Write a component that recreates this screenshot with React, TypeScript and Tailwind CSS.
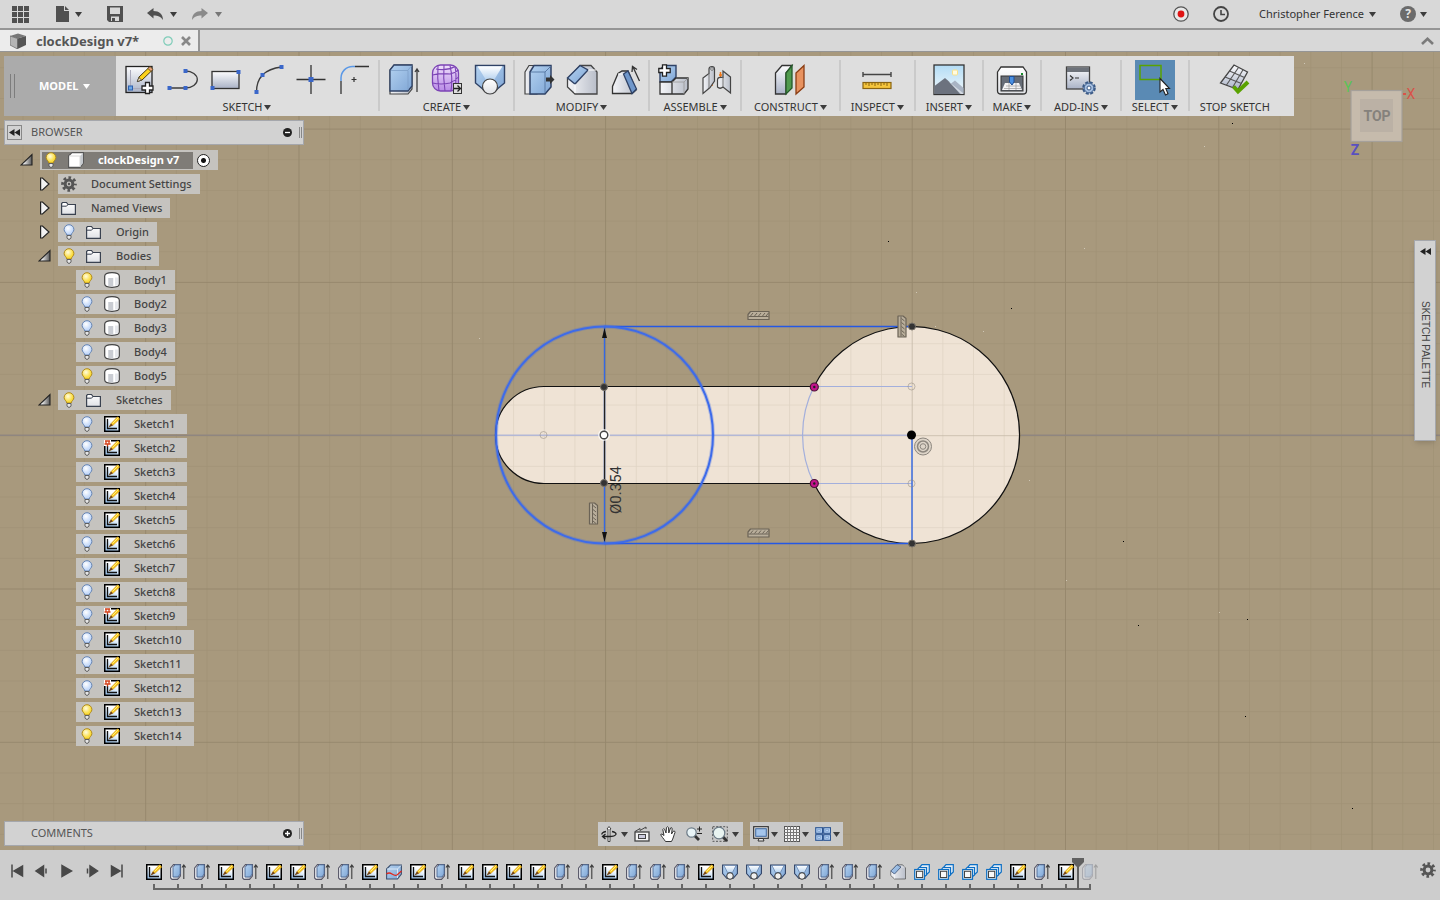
import type {ReactNode} from "react"

type BulbState = "on" | "off"
type NodeIcon = "component" | "gear" | "folder" | "body" | "sketch" | "pinnedSketch"
type Feature = "sketch" | "extrude" | "split" | "loft" | "fillet" | "pattern"

interface ITreeNode {
    label: string
    icon: NodeIcon
    level: 1 | 2
    bulb?: BulbState
    open?: boolean
}

interface IToolGroup {
    label: string
    tools: { name: string, icon: ReactNode, active?: boolean }[]
    menu: boolean
    pad: string
}

const INK = "#3c3c3c"
const NAVY = "#2f4266"
const HANDLE = "#3a67c9"

const Defs = () => (
    <svg className="absolute h-0 w-0" aria-hidden="true">
        <defs>
            <linearGradient id="blue" x1="0" y1="0" x2="1" y2="1">
                <stop offset="0" stopColor="#b4d2f0"/>
                <stop offset="1" stopColor="#7fa6d6"/>
            </linearGradient>
            <linearGradient id="silver" x1="0" y1="0" x2="0" y2="1">
                <stop offset="0" stopColor="#fdfdfe"/>
                <stop offset="1" stopColor="#a9b2c6"/>
            </linearGradient>
            <linearGradient id="side" x1="0" y1="0" x2="1" y2="0">
                <stop offset="0" stopColor="#f4f5f8"/>
                <stop offset="1" stopColor="#b9bec9"/>
            </linearGradient>
            <linearGradient id="paper" x1="0" y1="0" x2="0" y2="1">
                <stop offset="0" stopColor="#ffffff"/>
                <stop offset="1" stopColor="#dfe1e5"/>
            </linearGradient>
            <linearGradient id="glare" x1="0" y1="0" x2="0" y2="1">
                <stop offset="0" stopColor="#ffffff"/>
                <stop offset="1" stopColor="#b7d3f0"/>
            </linearGradient>
            <linearGradient id="purple" x1="0" y1="0" x2="0" y2="1">
                <stop offset="0" stopColor="#efe0fb"/>
                <stop offset="1" stopColor="#b88ae6"/>
            </linearGradient>
            <linearGradient id="sky" x1="0" y1="0" x2="0" y2="1">
                <stop offset="0" stopColor="#b3dcf5"/>
                <stop offset="1" stopColor="#f2f8fa"/>
            </linearGradient>
            <linearGradient id="page" x1="0.7" y1="0" x2="0.3" y2="1">
                <stop offset="0.3" stopColor="#ffffff"/>
                <stop offset="1" stopColor="#9cc6f0"/>
            </linearGradient>
            <linearGradient id="fold" x1="0" y1="0" x2="1" y2="0">
                <stop offset="0.2" stopColor="#ffffff"/>
                <stop offset="1" stopColor="#555555"/>
            </linearGradient>
            <radialGradient id="bulbOn" cx="0.4" cy="0.35">
                <stop offset="0" stopColor="#fffce0"/>
                <stop offset="1" stopColor="#fbdc3c"/>
            </radialGradient>
            <radialGradient id="bulbOff" cx="0.4" cy="0.35">
                <stop offset="0" stopColor="#ffffff"/>
                <stop offset="1" stopColor="#c5dafa"/>
            </radialGradient>
            <pattern id="minor" width="30.66" height="30.66" x="911.7" y="435.2" patternUnits="userSpaceOnUse">
                <path d="M0 0H30.66M0 0V30.66" stroke="#5c4f38" strokeOpacity="0.11" strokeWidth="1.6" fill="none"/>
            </pattern>
            <pattern id="major" width="153.3" height="153.3" x="911.7" y="435.2" patternUnits="userSpaceOnUse">
                <path d="M0 0H153.3M0 0V153.3" stroke="#5c4f38" strokeOpacity="0.16" strokeWidth="2" fill="none"/>
            </pattern>
        </defs>
    </svg>
)

function Icon({size = 32, box = 32, children}: { size?: 16 | 32, box?: number, children: ReactNode }) {
    return (
        <svg className={`shrink-0 ${size === 32 ? "h-8 w-8" : "h-4 w-4"}`} viewBox={`0 0 ${box} ${box}`} fill="none"
             aria-hidden="true">
            {children}
        </svg>
    )
}

function Caret({tone = "text-[#3c3c3c]"}: { tone?: string }) {
    return (
        <svg className={`h-[5px] w-[7px] shrink-0 ${tone}`} viewBox="0 0 7 5" aria-hidden="true">
            <path d="M0 0H7L3.5 5Z" fill="currentColor"/>
        </svg>
    )
}

const Handle = ({x, y}: { x: number, y: number }) => <rect x={x - 2} y={y - 2} width="4" height="4" fill={HANDLE}/>

/* ---- toolbar drawings ---- */

const createSketchIcon = (
    <Icon>
        <rect x="2" y="2.5" width="26" height="26" fill="url(#silver)" stroke="#222" strokeWidth="1.3"/>
        <path d="M6.500 6V24.500H24" stroke="#aab" strokeWidth="1"/>
        <rect x="4.500" y="22" width="4" height="4" fill="#6aa7e8" stroke="#2b5fae"/>
        <path d="M13.500 17.500L15 13L25 3.500L28 6.500L18 16Z" fill="#fbd21c" stroke="#4a3a10"/>
        <path d="M24 4.500L26 2.500L29 5.300L27 7.500Z" fill="#e8a07a" stroke="#4a3a10" strokeWidth="0.8"/>
        <path d="M13.200 17.700L14.800 13.500L17.500 16Z" fill="#f7e4c0" stroke="#333" strokeWidth="0.7"/>
        <path d="M21.500 18.500H25.500V22H29V26H25.500V29.500H21.500V26H18V22H21.500Z" fill="#fff" stroke="#222"
              strokeWidth="1.3"/>
    </Icon>
)
const lineIcon = (
    <Icon>
        <path d="M2.500 24H18.500A11.800 8.500 0 0 0 18.500 7" stroke={INK} strokeWidth="1.3"/>
        <Handle x={2.5} y={24}/><Handle x={18.5} y={24}/><Handle x={18.5} y={7}/>
    </Icon>
)
const rectangleIcon = (
    <Icon>
        <rect x="2" y="7.500" width="27" height="17" fill="url(#silver)" stroke="#333" strokeWidth="1.3"/>
        <Handle x={2.5} y={24}/><Handle x={28.5} y={8}/>
    </Icon>
)
const arcIcon = (
    <Icon>
        <path d="M3.500 28C3.500 14 12 5 28.500 3" stroke={INK} strokeWidth="1.3"/>
        <Handle x={3.5} y={28}/><Handle x={9.5} y={11}/><Handle x={28.5} y={3}/>
    </Icon>
)
const pointIcon = (
    <Icon>
        <path d="M0.500 15.500H29.500M15 1V30" stroke="#333" strokeWidth="1.3"/>
        <rect x="12.500" y="13" width="5" height="5" fill={HANDLE}/>
    </Icon>
)
const filletSketchIcon = (
    <Icon>
        <path d="M2 30V17M16 2.500H30" stroke="#333" strokeWidth="1.3"/>
        <path d="M2 17V14A11.500 11.500 0 0 1 13.500 2.500H16" stroke="#5a98e6" strokeWidth="1.5"/>
        <path d="M12.500 15.500H17.500M15 13V18" stroke="#333" strokeWidth="1.2"/>
    </Icon>
)
const extrudeIcon = (
    <Icon>
        <path d="M2 6L6 1H24V25L20 30H2Z" fill="url(#side)" stroke="#444" strokeWidth="1.2"/>
        <path d="M2 6L6 1H24V22L20 27H2Z" fill="url(#blue)" stroke={NAVY} strokeWidth="1.3"/>
        <path d="M3 6.500H20V26M20 6L24 1.500" stroke="#7d9fc8" strokeWidth="0.8"/>
        <path d="M29 5V28M27 8L29 5L31 8" stroke={INK} strokeWidth="1.3"/>
    </Icon>
)
const formIcon = (
    <Icon>
        <rect x="1.500" y="1" width="26" height="26" rx="8" fill="url(#purple)" stroke="#7c44b5" strokeWidth="1.3"/>
        <path d="M1.500 11Q10 9 19 10Q24 9 27.500 6M1.500 19Q10 21 19 19Q25 16 27.500 13M7 1.500Q6 14 8 27M13 1Q12 14 14 27M19 1.500Q22 14 20 27M24 2.500Q26 12 24 25M5 5Q16 7 24 2.500"
              stroke="#7c44b5" strokeWidth="1.100"/>
        <rect x="22.500" y="19.500" width="8" height="10" fill="#ddd" stroke="#333"/>
        <path d="M23 24.500H29M26.500 21.500L29.500 24.500L26.500 27.500" stroke="#222" strokeWidth="1.3"/>
    </Icon>
)
const loftIcon = (
    <Icon>
        <path d="M1.500 1.500H30.500V19L19 28.500H13L1.500 19Z" fill="url(#blue)" stroke={NAVY} strokeWidth="1.400"/>
        <path d="M3.500 2.200H28.500L20 16H12Z" fill="url(#glare)"/>
        <circle cx="16" cy="22.500" r="7.500" fill="url(#paper)" stroke="#444" strokeWidth="1.200"/>
    </Icon>
)
const pressPullIcon = (
    <Icon>
        <path d="M2 8L6 1.500H14V30H2Z" fill="url(#side)" stroke="#444" strokeWidth="1.200"/>
        <path d="M7 8L11 1.500H28V23L22 30H7Z" fill="url(#blue)" stroke={NAVY} strokeWidth="1.500"/>
        <path d="M8 8H22V29M22 8L28 2" stroke="#54749f" strokeWidth="0.900"/>
        <path d="M23 13.500H27V11L31.500 15.500L27 20V17.500H23Z" fill="#333"/>
    </Icon>
)
const filletShape = (
    <>
        <path d="M1.500 15L14 1.500H25L31 8V30H9L1.500 23Z" fill="url(#side)" stroke="#444" strokeWidth="1.300"/>
        <path d="M14 1.500L22 6L9 20L1.500 14Z" fill="url(#blue)" stroke={NAVY} strokeWidth="1.400"/>
        <path d="M22 6H30M9 20V29" stroke="#fff"/>
    </>
)
const draftIcon = (
    <Icon>
        <path d="M3.500 29.500V22.500L9 9.500L13 7H19L27 26L23 29.500Z" fill="url(#side)" stroke="#333" strokeWidth="1.300"/>
        <path d="M9 10H15" stroke="#fff"/>
        <path d="M14.500 10L19 7L27.500 25L23 29.500Z" fill="#6f97cb" stroke={NAVY} strokeWidth="1.300"/>
        <path d="M30.500 17L24 3M23 8L23.500 2.500L28 5.500" stroke="#333" strokeWidth="1.300"/>
    </Icon>
)
const newComponentIcon = (
    <Icon>
        <path d="M2 6L6 1.500H18V13L13 18H2Z" fill="url(#blue)" stroke={NAVY} strokeWidth="1.400"/>
        <path d="M2 18H14V30H2ZM14 18L18 14H30V25L26 30H14Z" fill="url(#side)" stroke="#333" strokeWidth="1.300"/>
        <path d="M14 18H26V30M26 18L30 14" stroke="#999" strokeWidth="0.800"/>
        <path d="M4.500 0.800H8.500V4.500H12.200V8.500H8.500V12.200H4.500V8.500H0.800V4.500H4.500Z" fill="#fff" stroke="#222"
              strokeWidth="1.300"/>
    </Icon>
)
const jointIcon = (
    <Icon>
        <path d="M11 17V22M9.500 18H12.500M19.500 8V14M18 11H21" stroke="#f07818" strokeWidth="1.500"/>
        <path d="M2 14L8 9.500V5Q8 2.500 11 2.500Q13.500 2.500 13.500 5V17L9 23.500L2 29.500Z" fill="url(#side)" stroke="#444"
              strokeWidth="1.200"/>
        <path d="M8 9V24" stroke="#777"/>
        <circle cx="11" cy="5" r="1.300" fill="#fff" stroke="#555" strokeWidth="0.800"/>
        <path d="M29.500 13L22 7V13.500Q16.500 12.500 16.500 16V23Q19 25.500 22 23L29.500 29Z" fill="url(#side)" stroke="#444"
              strokeWidth="1.200"/>
        <path d="M22 13V23" stroke="#777"/>
    </Icon>
)
const planeIcon = (
    <Icon>
        <path d="M1.500 9L8 1.500H18L12 9V30H1.500Z" fill="url(#silver)" stroke="#333" strokeWidth="1.300"/>
        <path d="M12 9L18 1.500V24L12 30Z" fill="#4f9a4e" stroke="#255a2a" strokeWidth="1.300"/>
        <path d="M22 9L30 1.500V23L22 30Z" fill="#e8925f" stroke="#8a3d14" strokeWidth="1.300"/>
    </Icon>
)
const measureIcon = (
    <Icon>
        <path d="M2 10.500H30M2 8V13M30 8V13" stroke="#444" strokeWidth="1.400"/>
        <rect x="2" y="18.500" width="28" height="6" fill="#f5c53c" stroke="#8a6410" strokeWidth="1.200"/>
        <path d="M5 19V21M8 19V22M11 19V21M14 19V22M17 19V21M20 19V22M23 19V21M26 19V22" stroke="#8a6410"/>
    </Icon>
)
const imageIcon = (
    <Icon>
        <rect x="1" y="1" width="30" height="29.500" fill="url(#sky)" stroke="#333" strokeWidth="1.300"/>
        <rect x="19.500" y="6" width="5" height="5" rx="1" fill="#fffbe0" stroke="#f8e08a"/>
        <path d="M16 21L22 16.500L30.500 24V30H16Z" fill="#a9b4c4"/>
        <path d="M1.500 22L12 14L16 17.500L27 30H1.500Z" fill="#6c727e"/>
        <path d="M15 17L28 30H30V29Z" fill="#fff" fillOpacity="0.500"/>
    </Icon>
)
const printerIcon = (
    <Icon>
        <path d="M1.500 8L5 3H27L30.500 8V27Q30.500 30 27 30H5Q1.500 30 1.500 27Z" fill="url(#paper)" stroke="#333"
              strokeWidth="1.300"/>
        <rect x="5" y="12" width="22" height="15" fill="#666d77" stroke="#333"/>
        <path d="M9 19H23L26 26H6Z" fill="#f4f4f4"/>
        <path d="M10 22H24M8 24.500H25M13 19V26M20 19V26" stroke="#999" strokeWidth="0.700"/>
        <path d="M13.500 12.500H18V18L16 21L13.500 18Z" fill="#4a90e2" stroke="#1e4f96"/>
        <rect x="25" y="9" width="2" height="2" fill="#158a2a"/>
    </Icon>
)
const scriptIcon = (
    <Icon>
        <rect x="1.500" y="3" width="23" height="22" fill="url(#silver)" stroke="#444" strokeWidth="1.300"/>
        <rect x="2" y="3.500" width="22" height="4.500" fill="#6d727a"/>
        <path d="M5 11.500L8 14L5 16.500M10 14H14" stroke="#333" strokeWidth="1.200"/>
        <circle cx="24" cy="24" r="5.500" fill="#b7cae4" stroke="#3b5a86" strokeWidth="2.600" strokeDasharray="2.900 1.420"/>
        <circle cx="24" cy="24" r="4.800" fill="#a6bfe0" stroke="#4a6a98"/>
        <circle cx="24" cy="24" r="2" fill="#fff" stroke="#3b5a86"/>
    </Icon>
)
const selectIcon = (
    <Icon>
        <rect x="1" y="1.500" width="21" height="14" stroke="#5aa200" strokeWidth="1.500"/>
        <path d="M21 14.500V28L24 25.500L26.500 31L29 29.800L26.800 24.500H30.500Z" fill="#fff" stroke="#222"
              strokeWidth="1.100"/>
    </Icon>
)
const stopSketchIcon = (
    <Icon>
        <path d="M15 1L28.500 8L19 25.500L1.500 19Z" fill="url(#silver)" stroke="#444" strokeWidth="1.300"/>
        <path d="M19.500 3.500L7.500 21M24 5.700L13.500 23.500M10.500 7L25.500 13.500M6 13L22.500 19.500" stroke="#555" strokeWidth="1.100"/>
        <path d="M14.500 22.500L19 27.500L29 18" stroke="#5aa200" strokeWidth="4"/>
    </Icon>
)

const toolGroups: IToolGroup[] = [
    {
        label: "SKETCH", menu: true, pad: "px-0.5", tools: [
            {name: "Create Sketch", icon: createSketchIcon},
            {name: "Line", icon: lineIcon},
            {name: "Rectangle", icon: rectangleIcon},
            {name: "Arc", icon: arcIcon},
            {name: "Point", icon: pointIcon},
            {name: "Sketch Fillet", icon: filletSketchIcon},
        ]
    },
    {
        label: "CREATE", menu: true, pad: "px-0.5", tools: [
            {name: "Extrude", icon: extrudeIcon},
            {name: "Create Form", icon: formIcon},
            {name: "Loft", icon: loftIcon},
        ]
    },
    {
        label: "MODIFY", menu: true, pad: "px-0.5", tools: [
            {name: "Press Pull", icon: pressPullIcon},
            {name: "Fillet", icon: <Icon>{filletShape}</Icon>},
            {name: "Draft", icon: draftIcon},
        ]
    },
    {
        label: "ASSEMBLE", menu: true, pad: "px-0.5", tools: [
            {name: "New Component", icon: newComponentIcon},
            {name: "Joint", icon: jointIcon},
        ]
    },
    {label: "CONSTRUCT", menu: true, pad: "px-3", tools: [{name: "Offset Plane", icon: planeIcon}]},
    {label: "INSPECT", menu: true, pad: "px-2.5", tools: [{name: "Measure", icon: measureIcon}]},
    {label: "INSERT", menu: true, pad: "px-2.5", tools: [{name: "Attached Canvas", icon: imageIcon}]},
    {label: "MAKE", menu: true, pad: "px-2", tools: [{name: "3D Print", icon: printerIcon}]},
    {label: "ADD-INS", menu: true, pad: "px-3", tools: [{name: "Scripts and Add-Ins", icon: scriptIcon}]},
    {label: "SELECT", menu: true, pad: "px-2.5", tools: [{name: "Select", icon: selectIcon, active: true}]},
    {label: "STOP SKETCH", menu: false, pad: "pr-6 pl-2.5", tools: [{name: "Stop Sketch", icon: stopSketchIcon}]},
]

const node = (label: string, icon: NodeIcon, level: 1 | 2, bulb?: BulbState, open?: boolean): ITreeNode =>
    ({label, icon, level, bulb, open})

const tree: ITreeNode[] = [
    node("Document Settings", "gear", 1, undefined, false),
    node("Named Views", "folder", 1, undefined, false),
    node("Origin", "folder", 1, "off", false),
    node("Bodies", "folder", 1, "on", true),
    node("Body1", "body", 2, "on"),
    node("Body2", "body", 2, "off"),
    node("Body3", "body", 2, "off"),
    node("Body4", "body", 2, "off"),
    node("Body5", "body", 2, "on"),
    node("Sketches", "folder", 1, "on", true),
    ...Array.from({length: 14}, (_, i) => node(
        `Sketch${i + 1}`,
        [2, 9, 12].includes(i + 1) ? "pinnedSketch" : "sketch",
        2,
        i + 1 >= 13 ? "on" : "off",
    )),
]

const featureKeys: Record<string, Feature> = {
    S: "sketch", E: "extrude", P: "split", L: "loft", F: "fillet", C: "pattern",
}
const features = [..."SEESESSEESPSESSSSEESEEESLLLLEEEFCCCCSESE"].map(key => featureKeys[key])
const markerIndex = 38

function Bulb({state}: { state: BulbState }) {
    const on = state === "on"
    return (
        <Icon size={16} box={16}>
            <path d="M8 0.700A4.900 4.900 0 0 0 3.100 5.600C3.100 8 5.600 8.800 5.800 11H10.200C10.400 8.800 12.900 8 12.900 5.600A4.900 4.900 0 0 0 8 0.700Z"
                  fill={on ? "url(#bulbOn)" : "url(#bulbOff)"} stroke={on ? "#b08a1a" : "#6484b4"}/>
            <path d="M6 11.500H10V14L9 15.200H7L6 14Z" fill="#e6e6e6" stroke="#555" strokeWidth="0.900"/>
        </Icon>
    )
}

const sketchShape = (
    <>
        <rect x="0.750" y="0.750" width="14.500" height="14.500" fill="url(#page)" stroke="#000" strokeWidth="1.500"/>
        <path d="M3.500 3V12.500H13" stroke="#111" strokeWidth="1.300"/>
        <path d="M5.500 10.500L7 7.500L13.500 0.800L15.800 3L9 9.300Z" fill="#f9c41c" stroke="#c98a14" strokeWidth="0.500"/>
        <path d="M4.500 11.500L7 7.500L9 9.300Z" fill="#6b4020"/>
        <path d="M8.500 7.500L14.500 1.500" stroke="#fff27a" strokeWidth="1"/>
    </>
)

const gearShape = (
    <>
        <circle cx="8" cy="8" r="6.300" stroke="#555" strokeWidth="3" strokeDasharray="2.600 2.348"
                strokeDashoffset="1.300"/>
        <circle cx="8" cy="8" r="3.900" stroke="#555" strokeWidth="3"/>
    </>
)

function TreeIcon({icon}: { icon: NodeIcon }) {
    return (
        <Icon size={16} box={16}>
            {icon === "component" && <>
                <path d="M0.600 4L4 0.600H15.400V11L12 15.400H0.600Z" fill="#fff" stroke="#555" strokeWidth="1.100"/>
                <path d="M12 4L15 1V11L12 15Z" fill="#c4c8cd"/>
                <path d="M1 4H12V15" stroke="#d8d8d8"/>
            </>}
            {icon === "gear" && <>{gearShape}<circle cx="8" cy="8" r="1.200" fill="#555"/></>}
            {icon === "folder" && <>
                <path d="M0.600 14.400V3.500L1.500 2.500H5.500L7 4.500H14.400V14.400Z" fill="url(#paper)" stroke="#3a4250"
                      strokeWidth="1.200"/>
                <path d="M1 6.200H5.500L7 4.500" stroke="#3a4250"/>
            </>}
            {icon === "body" && <>
                <path d="M0.700 4Q1 0.700 8 0.700T15.300 4V12Q15 15.300 8 15.300T0.700 12Z" fill="#fff" stroke="#444"
                      strokeWidth="1.200"/>
                <path d="M5.500 6V14M8 6V14.500" stroke="#c9ccd2" strokeWidth="2.500"/>
                <path d="M12.500 5.500V13.500" stroke="#e6e8ec" strokeWidth="3"/>
            </>}
            {(icon === "sketch" || icon === "pinnedSketch") && sketchShape}
            {icon === "pinnedSketch" && <>
                <rect x="0" y="0" width="7" height="6" fill="#fff"/>
                <path d="M1 1H6M2 1V3.500M5 1V3.500M0.500 4H6.500M3.500 4V6.500" stroke="#d4421c" strokeWidth="1.300"/>
            </>}
        </Icon>
    )
}

function Twisty({open, label}: { open: boolean, label: string }) {
    return (
        <button className="flex h-5 w-5 shrink-0 items-center" aria-label={`Toggle ${label}`}>
            <Icon size={16} box={16}>
                {open
                    ? <path d="M1 13H12V2.500Z" fill="url(#fold)" stroke="#222" strokeWidth="1.100"/>
                    : <path d="M2.600 2H4.500L11 8L4.500 14H2.600Z" fill="#f2f2f2" stroke="#222" strokeWidth="1.200"/>}
            </Icon>
        </button>
    )
}

function TreeRow({data}: { data: ITreeNode }) {
    const isSketch = data.icon === "sketch" || data.icon === "pinnedSketch"
    return (
        <li className={`flex h-5 ${data.level === 1 ? "pl-[34px]" : "pl-[72px]"}`}>
            {data.level === 1 && <Twisty open={!!data.open} label={data.label}/>}
            <div className={`flex items-center bg-[#c5c3bf] ${isSketch ? "pr-3" : "pr-2"}`}>
                {data.bulb
                    ? <button className="mr-[7px] flex w-[21px] justify-center" aria-label={`Visibility ${data.label}`}>
                        <Bulb state={data.bulb}/>
                    </button>
                    : <span className="w-[3px]"/>}
                <TreeIcon icon={data.icon}/>
                <span className="ml-[14px]">{data.label}</span>
            </div>
        </li>
    )
}

function PanelHeader({title, open}: { title: string, open: boolean }) {
    return (
        <div className="flex h-[25px] w-[300px] items-center border border-[#a5a7ac] bg-[#d2d2d2] pr-px pl-0.5 text-[11px] text-[#555]">
            {open
                ? <button aria-label="Collapse browser"
                          className="flex h-[15px] w-[15px] items-center justify-center border border-[#888]">
                    <svg className="h-[7px] w-[11px]" viewBox="0 0 11 7"><path d="M5.500 0V7L0 3.500ZM11 0V7L5.500 3.500Z" fill="#222"/></svg>
                </button>
                : <span className="w-[15px]"/>}
            <h2 className="ml-[9px] flex-1">{title}</h2>
            <button aria-label={`Toggle ${title}`}>
                <svg className="h-[9px] w-[9px]" viewBox="0 0 9 9">
                    <circle cx="4.500" cy="4.500" r="4.500" fill="#222"/>
                    <path d={open ? "M2 4.500H7" : "M2 4.500H7M4.500 2V7"} stroke="#fff" strokeWidth="1.300"/>
                </svg>
            </button>
            <span className="ml-[7px] h-[11px] w-[3px] border-x border-[#888]"/>
        </div>
    )
}

function FeatureIcon({feature}: { feature: Feature }) {
    if (feature === "fillet") return <Icon size={16}>{filletShape}</Icon>
    return (
        <Icon size={16} box={16}>
            {feature === "sketch" && sketchShape}
            {feature === "extrude" && <>
                <path d="M0.600 4L3.500 0.600H10.400V12L7.500 15.400H2L0.600 14Z" fill="url(#side)" stroke="#556" strokeWidth="1.100"/>
                <path d="M3 3.500L5 0.800H10.200V10L8 13H3Z" fill="url(#blue)" stroke="#4b648f" strokeWidth="0.900"/>
                <path d="M13.800 1V15M12 3.500L13.800 1L15.600 3.500" stroke={INK} strokeWidth="1.100"/>
            </>}
            {feature === "split" && <>
                <path d="M0.600 5L4.500 1H15.400V10L11.500 15H0.600Z" fill="url(#blue)" stroke="#3c5170" strokeWidth="1.100"/>
                <path d="M1 5H11.500V14M11.500 5L15 1.500" stroke="#e2edf8" strokeWidth="0.900"/>
                <path d="M0.500 10Q3 8 6 10T11 11L15.500 7" stroke="#e0281c" strokeWidth="1.300"/>
            </>}
            {feature === "loft" && <>
                <path d="M0.600 1H15.400V9.500L11 14.500H5L0.600 9.500Z" fill="url(#blue)" stroke={NAVY} strokeWidth="1.100"/>
                <path d="M2 1.500H14L10.500 8.500H5.500Z" fill="url(#glare)" stroke="#5f7ba6" strokeWidth="0.700"/>
                <circle cx="8" cy="12" r="3.300" fill="#f0f0f0" stroke="#333"/>
            </>}
            {feature === "pattern" && <>
                <path d="M5.500 3.500L8 0.700H15.300V8L12 11" fill="#e4edf6" stroke="#0d6fc4" strokeWidth="1.200"/>
                <path d="M3 6L5 3.500H12.500V11L10 13" fill="#e4edf6" stroke="#0d6fc4" strokeWidth="1.200"/>
                <rect x="0.700" y="5.500" width="9.800" height="9.800" fill="#eee" stroke="#0d6fc4" strokeWidth="1.200"/>
                <rect x="2.500" y="7.300" width="6.200" height="6.200" fill="#f8f8f8" stroke="#444"/>
            </>}
        </Icon>
    )
}

function Constraint({x, y, vertical}: { x: number, y: number, vertical?: boolean }) {
    return (
        <g transform={`translate(${x} ${y})${vertical ? " rotate(90)" : ""}`}>
            <path d="M-10.500 4V-1L-8 -4H10.500V4Z" fill="#b9ae9b" stroke="#6b6356" strokeWidth="1.200" strokeLinejoin="round"/>
            <path d="M-10 1H10" stroke="#6b6356"/>
            <path d="M-8 0.500L-5.500 -2.500M-4 0.500L-1.500 -2.500M0 0.500L2.500 -2.500M4 0.500L6.500 -2.500M7.500 0.500L10 -2.500"
                  stroke="#6b6356"/>
        </g>
    )
}

const specks = [[888, 241], [1011, 308], [1123, 541], [1138, 625], [1247, 619], [1245, 716], [1352, 808], [1232, 123]]
const lightSpecks = [[479, 338], [916, 292], [935, 326], [983, 331], [1029, 480], [1084, 248], [1204, 146], [1304, 63], [1066, 580], [1219, 612]]

function SketchCanvas() {
    return (
        <svg className="absolute inset-0 h-full w-full" viewBox="0 52 1440 798" preserveAspectRatio="xMidYMid slice"
             fill="none" role="img" aria-label="Sketch canvas">
            <rect x="-1000" y="-1000" width="3440" height="2900" fill="#a8997d"/>

            <path d="M544 386.500H814A108.500 108.500 0 1 1 814 483.500H544A48.500 48.500 0 0 1 544 386.500Z" fill="#efe3d5"/>
            <rect x="-1000" y="-1000" width="3440" height="2900" fill="url(#minor)"/>
            <rect x="-1000" y="-1000" width="3440" height="2900" fill="url(#major)"/>
            <path d="M-1000 435.200H496M1021 435.200H2440" stroke="#8f8680" strokeWidth="1.500"/>
            <path d="M496 435.200H912" stroke="#b3b8d6" strokeWidth="1.500"/>

            <path d="M544 386.500H814A108.500 108.500 0 1 1 814 483.500H544A48.500 48.500 0 0 1 544 386.500Z" stroke="#111"
                  strokeWidth="1.200"/>
            <path d="M814 386.500A108.500 108.500 0 0 0 814 483.500M814 386.500H912M814 483.500H912" stroke="#a3afdc"
                  strokeWidth="1.200"/>

            <path d="M604 326.500H912M604 543.500H912" stroke="#2458e4" strokeWidth="1.400"/>
            <circle cx="604.500" cy="435" r="108.500" stroke="#3d6bea" strokeOpacity="0.300" strokeWidth="4"/>
            <circle cx="604.500" cy="435" r="108.500" stroke="#3d6bea" strokeWidth="2"/>
            <path d="M604.500 327V543M912 435V543" stroke="#3468e4" strokeWidth="1.400"/>
            <path d="M604.500 387V483" stroke="#222" strokeWidth="1.200"/>
            <path d="M604.500 328L607 338H602ZM604.500 542L607 532H602Z" fill="#111"/>

            <g stroke="#8d857b" strokeOpacity="0.500">
                <circle cx="543.500" cy="435" r="3.500"/>
                <circle cx="911.500" cy="386.500" r="3.500"/>
                <circle cx="911.500" cy="483.500" r="3.500"/>
            </g>
            {[[604, 387], [604, 483], [912, 326.5], [912, 543.5]].map(([x, y]) =>
                <circle key={`${x}-${y}`} cx={x} cy={y} r="3.500" fill="#333" stroke="#77726a"/>
            )}
            {[387, 483.5].map(y =>
                <g key={y}>
                    <circle cx="814.300" cy={y} r="4" fill="#c4148c" stroke="#4c1238" strokeWidth="1.200"/>
                    <circle cx="814.300" cy={y} r="1.200" fill="#222"/>
                </g>
            )}
            <circle cx="911.500" cy="435" r="4.500" fill="#000"/>
            <circle cx="604" cy="435" r="6" fill="#fff" fillOpacity="0.700"/>
            <circle cx="604" cy="435" r="3.800" fill="#fff" stroke="#444" strokeWidth="1.400"/>
            <g stroke="#8c867e">
                <circle cx="923" cy="446.500" r="8.500" fill="#ddd4c8"/>
                <circle cx="923" cy="446.500" r="5.500" strokeWidth="1.500"/>
                <circle cx="923" cy="446.500" r="2.800"/>
            </g>

            <Constraint x={758.5} y={315.5}/>
            <Constraint x={758.5} y={533}/>
            <Constraint x={902} y={326.5} vertical/>
            <Constraint x={593.5} y={513.5} vertical/>

            <text transform="translate(621 514) rotate(-90)" fill="#333" fontSize="15" fontFamily="Roboto, sans-serif">Ø0.354</text>

            {specks.map(([x, y]) => <rect key={x} x={x} y={y} width="1" height="1" fill="#000"/>)}
            {lightSpecks.map(([x, y]) => <rect key={x} x={x} y={y} width="1" height="1" fill="#cfc7b6"/>)}
        </svg>
    )
}

function ViewCube() {
    return (
        <div className="absolute top-6 right-4 h-[88px] w-[88px]">
            <svg className="h-full w-full" viewBox="-10 -4 88 88" fill="none" fontSize="14" fontWeight="700"
                 fontFamily="Liberation Sans Narrow, Roboto, sans-serif" textAnchor="middle">
                <text x="2" y="12" fill="#58c455" fontWeight="400">Y</text>
                <text x="65" y="19" fill="#d9534a" fontWeight="400">X</text>
                <path d="M57 14H60" stroke="#d9534a" strokeWidth="2"/>
                <rect x="5" y="10.500" width="51" height="51" fill="#c6bbac" stroke="#a5a09a" strokeWidth="1.200"/>
                <rect x="14" y="19" width="33" height="33" fill="#bbb1a5"/>
                <text x="31" y="41" fill="#85817c">TOP</text>
                <text x="9" y="75" fill="#5850c0">Z</text>
            </svg>
        </div>
    )
}

function TopBar() {
    return (
        <header className="flex h-[30px] items-center border-b-2 border-[#959595] bg-[#d8d8d8] pr-[13px] pl-3 text-[11px] text-[#333]">
            <button aria-label="Data panel">
                <svg className="h-[17px] w-[17px]" viewBox="0 0 17 17" fill="#505050">
                    {[0, 6, 12].map(y => [0, 6, 12].map(x => <rect key={`${x}-${y}`} x={x} y={y} width="5" height="5"/>))}
                </svg>
            </button>
            <button className="ml-[25px] flex items-center gap-[5px]" aria-label="File">
                <Icon size={16} box={16}><path d="M2 0H10V5H15V16H2ZM11 0L15 4H11Z" fill="#505050"/></Icon>
                <Caret/>
            </button>
            <button className="ml-[25px]" aria-label="Save">
                <Icon size={16} box={16}>
                    <path d="M0 0H16V16H2L0 14Z" fill="#505050"/>
                    <path d="M3 1.500H13V8H3ZM4 10.500H12V15H4Z" fill="#d8d8d8"/>
                    <path d="M5 12H8V15H5Z" fill="#505050"/>
                </Icon>
            </button>
            <button className="ml-[24px] flex items-center gap-[7px]" aria-label="Undo">
                <Icon size={16} box={16}><path d="M0 7L6.500 2V5C12 5 16 8 16 14C13.500 10.500 11 9.500 6.500 9.500V12.500Z" fill="#505050"/></Icon>
                <Caret/>
            </button>
            <button className="ml-[15px] flex items-center gap-[7px]" aria-label="Redo">
                <Icon size={16} box={16}><path d="M16 7L9.500 2V5C4 5 0 8 0 14C2.500 10.500 5 9.500 9.500 9.500V12.500Z" fill="#8a8a8a"/></Icon>
                <Caret tone="text-[#777]"/>
            </button>
            <div className="ml-auto flex items-center">
                <button aria-label="Record">
                    <Icon size={16} box={16}>
                        <circle cx="8" cy="8" r="7.200" fill="#e9e9e9" stroke="#555" strokeWidth="1.300"/>
                        <circle cx="8" cy="8" r="3.400" fill="#e01414"/>
                    </Icon>
                </button>
                <button className="ml-6" aria-label="Job status">
                    <Icon size={16} box={16}>
                        <circle cx="8" cy="8" r="7" stroke="#444" strokeWidth="1.800"/>
                        <path d="M8 4V8.500H12" stroke="#444" strokeWidth="1.600"/>
                    </Icon>
                </button>
                <button className="ml-[30px] flex items-center gap-[5px]">Christopher Ference<Caret/></button>
                <button className="ml-6 flex items-center gap-1" aria-label="Help">
                    <span className="flex h-4 w-4 items-center justify-center rounded-full bg-[#6b6b6b] text-[12px] leading-4 font-bold text-[#e4e4e4]">?</span>
                    <Caret/>
                </button>
            </div>
        </header>
    )
}

function TabBar() {
    return (
        <nav className="flex h-[22px] items-center border-b border-[#959595] bg-[#d8d8d8] pr-1.5">
            <div className="flex h-full w-[200px] items-center border-r-2 border-[#959595] bg-[#ececec] pl-2.5">
                <Icon size={16} box={16}>
                    <path d="M0 3L8 0.500L16 3L7.500 5.500Z" fill="#777"/>
                    <path d="M0 3L7.500 5.500V16L0 12Z" fill="#b5b5b5" stroke="#666" strokeWidth="0.700"/>
                    <path d="M7.500 5.500L16 3V12L7.500 16Z" fill="#555"/>
                </Icon>
                <a href="#design" className="ml-2.5 flex-1 text-[13px] leading-5 font-bold text-[#555]">clockDesign v7*</a>
                <svg className="h-[10px] w-[10px]" viewBox="0 0 10 10" fill="none"><circle cx="5" cy="5" r="4.200" stroke="#7fcdb9" strokeWidth="1.200"/></svg>
                <button className="mr-[7px] ml-2" aria-label="Close tab">
                    <svg className="h-[10px] w-[10px]" viewBox="0 0 10 10"><path d="M1 1L9 9M9 1L1 9" stroke="#888" strokeWidth="2.600"/></svg>
                </button>
            </div>
            <button className="ml-auto" aria-label="Collapse toolbar">
                <svg className="h-[8px] w-[13px]" viewBox="0 0 13 8" fill="none"><path d="M1 7L6.500 1.800L12 7" stroke="#7b7b7b" strokeWidth="2.600"/></svg>
            </button>
        </nav>
    )
}

function Toolbar() {
    return (
        <div className="flex h-[60px] w-fit bg-[#dedede] text-[11px] leading-[14px] text-[#333]">
            <button className="flex w-28 items-center bg-[#ababab] pl-1.5 font-bold text-white">
                <span className="mr-6 h-6 w-[5px] border-x border-[#7d7d7d]"/>
                MODEL
                <Caret tone="ml-[5px] text-white"/>
            </button>
            {toolGroups.map((group, index) => (
                <div key={group.label} className="flex">
                    {index > 0 && <span className="mt-1 h-[51px] w-0.5 bg-[#cacaca]"/>}
                    <div className={`flex flex-col items-center pt-1 ${group.pad}`}>
                        <div className="flex">
                            {group.tools.map(tool => (
                                <span key={tool.name} className={`flex justify-center ${group.tools.length > 1 ? "w-[43px]" : ""}`}>
                                    <button aria-label={tool.name}
                                            className={`flex h-10 w-10 items-center justify-center ${tool.active ? "bg-[#5a8ab4]" : ""}`}>
                                        {tool.icon}
                                    </button>
                                </span>
                            ))}
                        </div>
                        <button className="flex items-center gap-0.5 whitespace-nowrap">
                            {group.label}
                            {group.menu && <Caret/>}
                        </button>
                    </div>
                </div>
            ))}
        </div>
    )
}

function NavBar() {
    return (
        <div className="flex h-6 justify-center gap-[7px]">
            <div className="flex items-center bg-[#c9c9c9]">
                <button className="flex w-[31px] items-center gap-1 pl-[3px]" aria-label="Orbit">
                    <Icon size={16} box={16}>
                        <path d="M8 0.500L10 3H9V15.500H7V3H6Z" fill="#fff" stroke="#333" strokeWidth="0.900"/>
                        <path d="M11 5.500C17 6.500 16.500 10.500 8 10.500H2M5 5.500Q0.500 6.500 1 8.500M4.500 8L1.500 10.500L4.500 13" stroke="#222" strokeWidth="1.300"/>
                    </Icon>
                    <Caret/>
                </button>
                <button className="flex w-[26px] justify-center" aria-label="Look at">
                    <Icon size={16} box={16}>
                        <rect x="1" y="6" width="14" height="9" fill="#f4f4f4" stroke="#444" strokeWidth="1.300"/>
                        <rect x="4.500" y="8.500" width="7" height="4" fill="#ccd" stroke="#444"/>
                        <path d="M1 5.500L6 2.500V4.500L12 1V3" stroke="#444"/>
                    </Icon>
                </button>
                <button className="flex w-[26px] justify-center" aria-label="Pan">
                    <Icon size={16} box={16}>
                        <path d="M5.500 15.500C4 13 1 10 0.700 8.500Q1.500 7 4 9.500L2.800 3.500Q3.500 1.800 4.700 3.500L6 7L6.500 1.500Q7.500 0 8.500 1.500L8.800 7L10.500 2Q12 1 12.200 2.800L11.500 8L13.500 5Q15.300 4.700 15 6.500C13.500 10 13.500 12 11.500 15.500Z"
                              fill="#fff" stroke="#333" strokeWidth="1"/>
                    </Icon>
                </button>
                <button className="flex w-[26px] justify-center" aria-label="Zoom">
                    <Icon size={16} box={16}>
                        <path d="M8.500 9.500L13 14" stroke="#333" strokeWidth="2.800"/>
                        <circle cx="5.500" cy="6.500" r="4.700" fill="#e8f3f6" stroke="#6b7a86" strokeWidth="1.200"/>
                        <path d="M11 3H16M13.500 0.500V5.500M11 7.500H16" stroke="#222"/>
                    </Icon>
                </button>
                <button className="flex w-9 items-center gap-1 pl-[5px]" aria-label="Fit">
                    <Icon size={16} box={16}>
                        <rect x="0.700" y="0.700" width="14.600" height="14.600" stroke="#555" strokeDasharray="2 1.500"/>
                        <path d="M11 11L15 15" stroke="#333" strokeWidth="3"/>
                        <circle cx="7" cy="7" r="5.800" fill="#e8f3f0" stroke="#6b7a86" strokeWidth="1.200"/>
                    </Icon>
                    <Caret/>
                </button>
            </div>
            <div className="flex items-center bg-[#c9c9c9]">
                <button className="flex w-[31px] items-center gap-0.5 pl-[3px]" aria-label="Display settings">
                    <Icon size={16} box={16}>
                        <rect x="0.700" y="0.700" width="14.600" height="11.600" fill="#eee" stroke="#333" strokeWidth="1.200"/>
                        <rect x="2.700" y="2.700" width="10.600" height="7.600" fill="#a4c5ec" stroke="#3c659c"/>
                        <path d="M5 15H11L10 12.500H6Z" fill="#eee" stroke="#333"/>
                    </Icon>
                    <Caret/>
                </button>
                <button className="flex w-[31px] items-center gap-0.5 pl-[3px]" aria-label="Grid and snaps">
                    <Icon size={16} box={16}>
                        <rect x="0.500" y="0.500" width="15" height="15" fill="#f4f4f4" stroke="#555"/>
                        <path d="M3.500 0V16M6.500 0V16M9.500 0V16M12.500 0V16M0 3.500H16M0 6.500H16M0 9.500H16M0 12.500H16" stroke="#777"/>
                    </Icon>
                    <Caret/>
                </button>
                <button className="flex w-[31px] items-center gap-0.5 pl-[3px]" aria-label="Viewports">
                    <Icon size={16} box={16}>
                        {[[0.7, 1.7], [8.7, 1.7], [0.7, 8.7], [8.7, 8.7]].map(([x, y]) =>
                            <g key={`${x}-${y}`}>
                                <rect x={x} y={y} width="6.800" height="5.600" fill="#b4d0f2" stroke="#2c5592" strokeWidth="1.100"/>
                                <rect x={x + 2} y={y + 1.8} width="2.800" height="2" fill="#b4d0f2" stroke="#7ba0d0" strokeWidth="0.700"/>
                            </g>
                        )}
                    </Icon>
                    <Caret/>
                </button>
            </div>
        </div>
    )
}

const playback = [
    {name: "Go to start", path: "M3 1.500V14.500M13.500 3V13L5 8Z"},
    {name: "Step back", path: "M9.500 3V13L2 8ZM12 5.500V10.500"},
    {name: "Play", path: "M3 2.500V13.500L12.500 8Z"},
    {name: "Step forward", path: "M6 3V13L13.500 8ZM3.500 5.500V10.500"},
    {name: "Go to end", path: "M2.500 3V13L11 8ZM13 1.500V14.500"},
]

function TimelineBar() {
    return (
        <footer className="flex h-[50px] shrink-0 bg-[#cdcdcd]">
            <div className="flex w-[142px] shrink-0 gap-[9px] pt-[13px] pl-[9px]">
                {playback.map(({name, path}) => (
                    <button key={name} className="h-4" aria-label={name}>
                        <Icon size={16} box={16}><path d={path} fill="#484848" stroke="#484848" strokeWidth="1.500"/></Icon>
                    </button>
                ))}
            </div>
            <div className="pt-3.5">
                <ol className="flex">
                    {features.map((feature, index) => (
                        <li key={index} className="relative flex w-6 flex-col items-center">
                            <button className={index > markerIndex ? "opacity-30" : ""} aria-label={`${feature} feature ${index + 1}`}>
                                <FeatureIcon feature={feature}/>
                            </button>
                            <span className="mt-1 h-1 w-0.5 bg-[#666]"/>
                            {index === markerIndex &&
                                <svg className="absolute -top-1.5 -right-1.5 h-8 w-3" viewBox="0 0 12 32" aria-hidden="true">
                                    <path d="M0 0H12V4L7 9V32H5V9L0 4Z" fill="#606060"/>
                                </svg>}
                        </li>
                    ))}
                </ol>
                <div className="mx-[11px] h-0.5 bg-[#666]"/>
            </div>
            <button className="mt-3 mr-1 ml-auto h-4" aria-label="Timeline settings">
                <Icon size={16} box={16}>{gearShape}</Icon>
            </button>
        </footer>
    )
}

export default function App() {
    return (
        <div className="flex h-screen flex-col overflow-hidden font-['Noto_Sans','Open_Sans',sans-serif]">
            <Defs/>
            <TopBar/>
            <TabBar/>
            <main className="relative flex min-h-0 flex-1 flex-col">
                <SketchCanvas/>
                <ViewCube/>
                <div className="relative flex min-h-0 flex-1 flex-col p-1">
                    <Toolbar/>
                    <div className="flex min-h-0 flex-1 items-start justify-between pt-1">
                        <section>
                            <PanelHeader title="BROWSER" open/>
                            <ul className="mt-[5px] flex flex-col gap-1 text-[11px] leading-4 font-medium text-[#444]">
                                <li className="flex h-5 pl-4">
                                    <Twisty open label="clockDesign v7"/>
                                    <div className="flex items-center bg-[#c5c3bf] pr-2">
                                        <div className="flex h-[17px] items-center bg-[#7f7c77] pr-[14px] text-white shadow-[inset_2px_0_0_#c5c3bf]">
                                            <button className="mr-[7px] flex w-[21px] justify-center" aria-label="Visibility clockDesign v7"><Bulb state="on"/></button>
                                            <TreeIcon icon="component"/>
                                            <span className="ml-[14px] font-bold">clockDesign v7</span>
                                        </div>
                                        <label className="ml-1 flex">
                                            <input type="radio" defaultChecked aria-label="Activate clockDesign v7"
                                                   className="h-[13px] w-[13px] appearance-none rounded-full border border-[#222] bg-[radial-gradient(#111_0_2px,#fff_3px)]"/>
                                        </label>
                                    </div>
                                </li>
                                {tree.map(data => <TreeRow key={data.label} data={data}/>)}
                            </ul>
                        </section>
                        <button className="mt-30 flex h-[201px] w-[22px] flex-col items-center border border-[#a5a7ac] bg-[#d2d2d2] pt-[7px] text-[10px] text-[#444] shadow-md">
                            <svg className="h-[7px] w-[11px]" viewBox="0 0 11 7"><path d="M5.500 0V7L0 3.500ZM11 0V7L5.500 3.500Z" fill="#222"/></svg>
                            <span className="mt-[46px] font-['Liberation_Sans',sans-serif] [writing-mode:vertical-rl]">SKETCH PALETTE</span>
                        </button>
                    </div>
                    <div className="grid grid-cols-[300px_1fr_300px] items-end">
                        <PanelHeader title="COMMENTS" open={false}/>
                        <NavBar/>
                    </div>
                </div>
            </main>
            <TimelineBar/>
        </div>
    )
}
